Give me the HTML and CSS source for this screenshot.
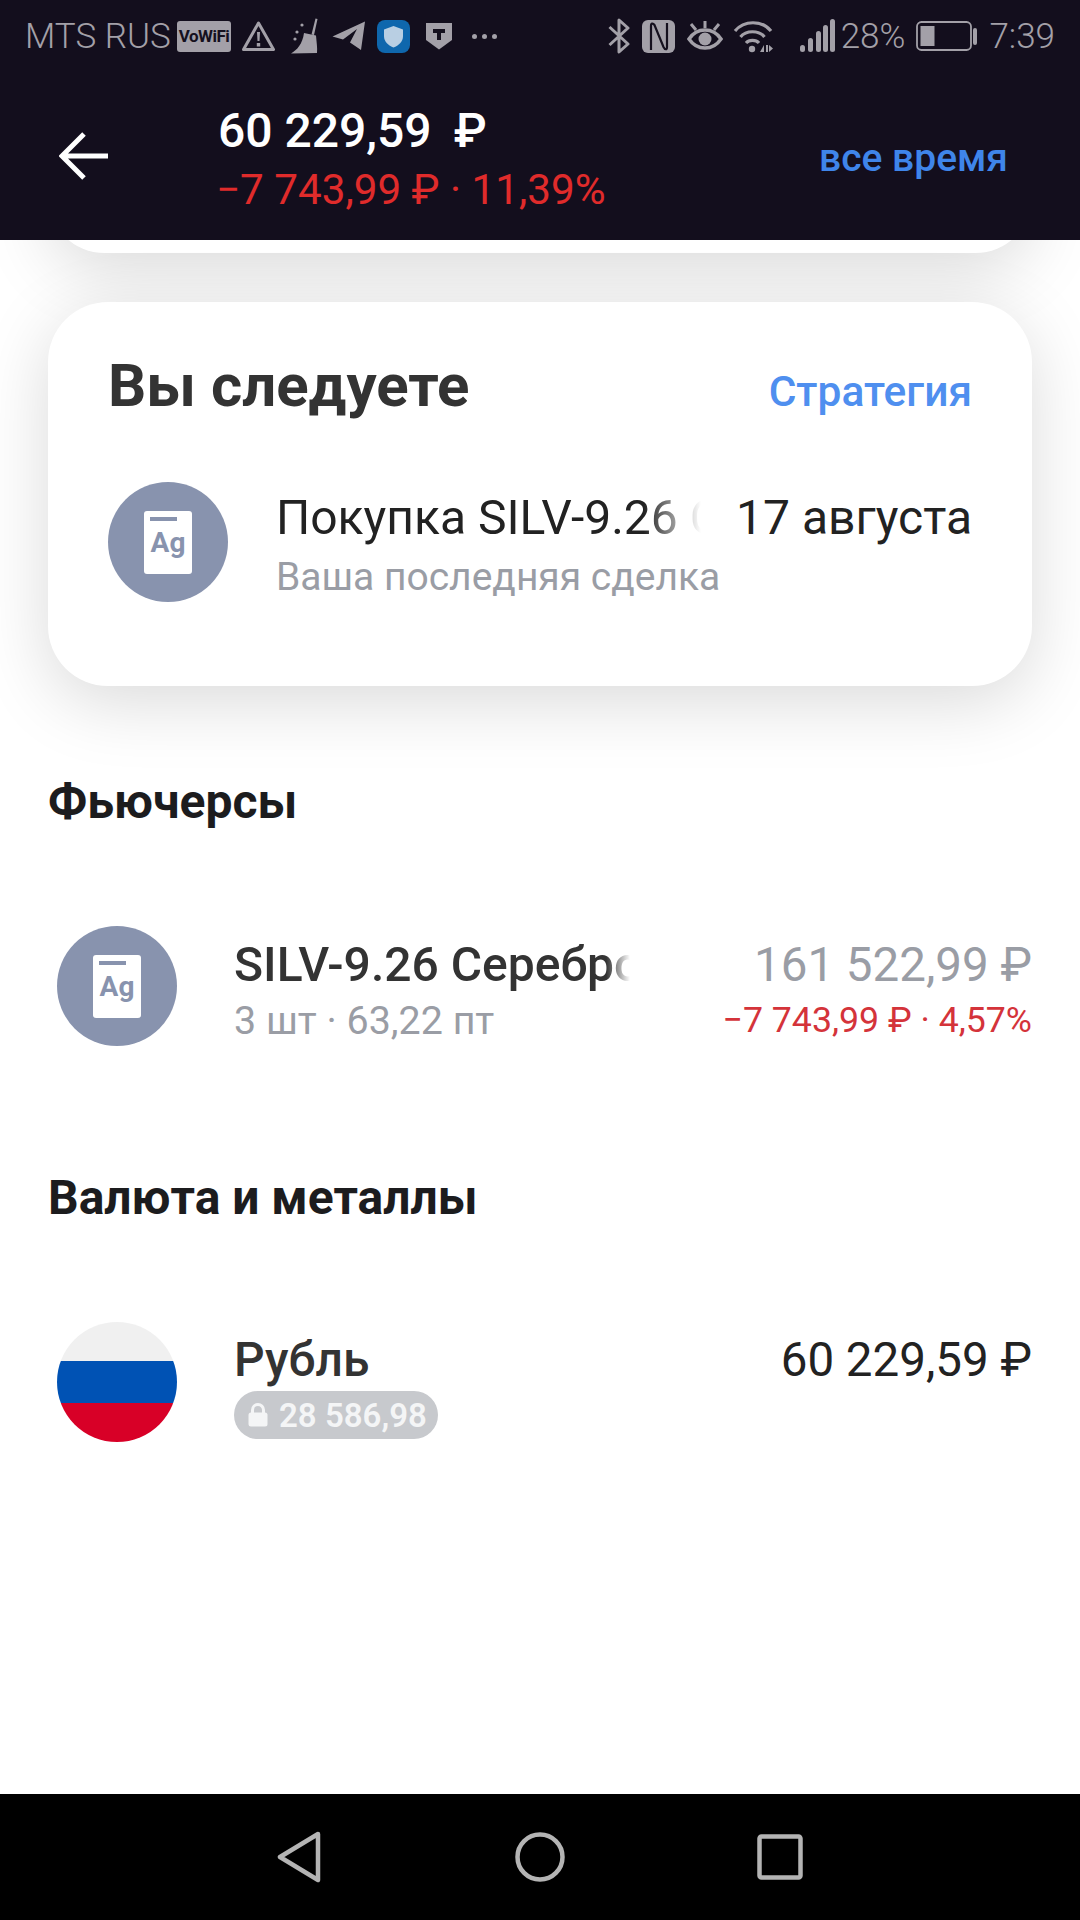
FILE: index.html
```html
<!DOCTYPE html>
<html lang="ru">
<head>
    <meta charset="UTF-8">
    <meta name="viewport" content="width=device-width, initial-scale=1.0">
    <title>Портфель</title>
    <link rel="stylesheet" href="styles.css">
</head>
<body>
    <div class="screen">
        <header class="top">
            <div class="status">
                <div class="status-group">
                    <span class="carrier">MTS RUS</span>
                    <span class="vowifi">VoWiFi</span>
                    <svg class="ic" width="33" height="30" viewBox="0 0 33 30"><path d="M16.5 2 L31.5 28.5 H1.5 Z" fill="none" stroke="#a3a0a8" stroke-width="3" stroke-linejoin="round"/><path d="M15 11h3l-.5 9h-2z M14.8 22h3.4v3.4h-3.4z" fill="#a3a0a8"/></svg>
                    <svg class="ic broom" width="30" height="36" viewBox="0 0 30 36"><path d="M25.500 0.500 L27.500 1 L24 17 L21.500 16.500 Z" fill="#a3a0a8"/><path d="M14 15 L26 17.500 C26.500 24 27.500 30 27 35 L1 35.500 C7 32 12.500 26 14 15 Z" fill="#a3a0a8"/><circle cx="7" cy="14" r="1.600" fill="#a3a0a8"/><circle cx="12" cy="7" r="1.600" fill="#a3a0a8"/><circle cx="5" cy="21" r="1.600" fill="#a3a0a8"/></svg>
                    <svg class="ic plane" width="34" height="30" viewBox="0 0 34 30"><path d="M33 0.500 L29 29 L18 21.500 L25 8 L11 18.500 L0.500 15.500 Z" fill="#a3a0a8"/></svg>
                    <svg class="ic shield-app" width="33" height="33" viewBox="0 0 33 33"><rect width="33" height="33" rx="8" fill="#0f67ad"/><path d="M16.500 6 L26 9.500 V16 C26 22 21.500 25.500 16.500 27.500 C11.500 25.500 7 22 7 16 V9.500 Z" fill="#b9cfe3"/></svg>
                    <svg class="ic" width="28" height="28" viewBox="0 0 28 28"><path d="M1 1 H27 V18 L14 27.500 L1 18 Z" fill="#a3a0a8"/><path d="M8 7 H20 V11 H16 V18 H12 V11 H8 Z" fill="#15101e"/></svg>
                    <span class="dots"><i></i><i></i><i></i></span>
                </div>
                <div class="status-group status-right">
                    <svg class="ic" width="23" height="36" viewBox="0 0 23 36"><path d="M1.500 9 L20 26 L11 34 V2 L20 10 L1.500 27" fill="none" stroke="#a3a0a8" stroke-width="3" stroke-linejoin="round"/></svg>
                    <svg class="ic nfc" width="33" height="33" viewBox="0 0 33 33"><rect width="33" height="33" rx="6" fill="#a3a0a8"/><path d="M9 30 V6 C9 3 11 3 12.500 5 L21.500 27 C23 30 25 30 25 27 V3" fill="none" stroke="#15101e" stroke-width="2.200"/></svg>
                    <svg class="ic eye" width="36" height="33" viewBox="0 0 36 33"><path d="M2 19 C10 7 26 7 34 19 C26 31 10 31 2 19 Z" fill="none" stroke="#a3a0a8" stroke-width="3.500"/><circle cx="18" cy="19" r="6.500" fill="#a3a0a8"/><path d="M18 1 V8 M4 4 L9 10 M32 4 L27 10" stroke="#a3a0a8" stroke-width="3"/></svg>
                    <svg class="ic wifi" width="40" height="33" viewBox="0 0 40 33"><path d="M2 11 C11 0 29 0 38 11 M7.500 17 C13 10 26 10 31.500 17 M13 23 C16 19.500 23 19.500 26 23" fill="none" stroke="#a3a0a8" stroke-width="3.200"/><circle cx="19" cy="29" r="3.200" fill="#a3a0a8"/><path d="M27 32 L31 25 V32 Z M33 25 H35 V32 H33 Z M36 25 L40 28.500 L36 32 Z" fill="#a3a0a8"/></svg>
                    <svg class="ic signal" width="35" height="34" viewBox="0 0 35 34"><rect x="0" y="26" width="5" height="7" rx="2.500" fill="#a3a0a8"/><rect x="8" y="19" width="5" height="14" rx="2.500" fill="#a3a0a8"/><rect x="16" y="12" width="5" height="21" rx="2.500" fill="#a3a0a8"/><rect x="23" y="6" width="5" height="27" rx="2.500" fill="#a3a0a8"/><rect x="30" y="0" width="5" height="33" rx="2.500" fill="#a3a0a8"/></svg>
                    <span class="percent">28%</span>
                    <svg class="ic battery" width="61" height="30" viewBox="0 0 61 30"><rect x="1" y="1" width="54" height="28" rx="4.500" fill="none" stroke="#a3a0a8" stroke-width="1.800"/><rect x="4.500" y="5" width="14" height="20" fill="#a3a0a8"/><rect x="57" y="7" width="4" height="17" rx="2" fill="#a3a0a8"/></svg>
                    <span class="clock">7:39</span>
                </div>
            </div>
            <div class="appbar">
                <svg class="arrow" width="50" height="48" viewBox="0 0 50 48"><path d="M49 24 H4 M25 2 L3 24 L25 46" fill="none" stroke="#ffffff" stroke-width="5"/></svg>
                <div class="balance">
                    <div class="balance-sum">60 229,59<span class="balance-cur">₽</span></div>
                    <div class="balance-diff">−7 743,99 ₽ · 11,39%</div>
                </div>
                <a class="period">все время</a>
            </div>
        </header>

        <main class="content">
            <div class="card card-prev"></div>

            <section class="card">
                <div class="card-head">
                    <h2 class="card-title">Вы следуете</h2>
                    <a class="card-link">Стратегия</a>
                </div>
                <div class="row row-follow">
                    <div class="avatar"><div class="doc">Ag</div></div>
                    <div class="follow-body">
                        <div class="follow-line">
                            <span class="follow-name">Покупка SILV-9.26 Серебро</span>
                            <span class="follow-date">17 августа</span>
                        </div>
                        <div class="muted follow-sub">Ваша последняя сделка</div>
                    </div>
                </div>
            </section>

            <section class="group group-futures">
                <h3 class="group-title">Фьючерсы</h3>
                <div class="row asset">
                    <div class="avatar"><div class="doc">Ag</div></div>
                    <div class="asset-body">
                        <div class="asset-name fade">SILV-9.26 Серебро</div>
                        <div class="muted asset-sub">3 шт · 63,22 пт</div>
                    </div>
                    <div class="asset-values">
                        <div class="asset-price muted">161 522,99 ₽</div>
                        <div class="asset-diff">−7 743,99 ₽ · 4,57%</div>
                    </div>
                </div>
            </section>

            <section class="group group-money">
                <h3 class="group-title">Валюта и металлы</h3>
                <div class="row asset">
                    <div class="avatar flag"></div>
                    <div class="asset-body">
                        <div class="asset-name">Рубль</div>
                        <div class="pill">
                            <svg width="20" height="24" viewBox="0 0 20 24"><path d="M4.500 10 V7 a5.500 5.500 0 0 1 11 0 V10" fill="none" stroke="#f4f5f6" stroke-width="3"/><rect x="0.500" y="9.500" width="19" height="14" rx="2.500" fill="#f4f5f6"/></svg>
                            <span>28 586,98</span>
                        </div>
                    </div>
                    <div class="asset-values">
                        <div class="asset-price money">60 229,59 ₽</div>
                    </div>
                </div>
            </section>
        </main>

        <nav class="navbar">
            <svg width="46" height="52" viewBox="0 0 46 52"><path d="M41 3 L3 26 L41 49 Z" fill="none" stroke="#b4b4b4" stroke-width="4.500" stroke-linejoin="round"/></svg>
            <svg width="50" height="50" viewBox="0 0 50 50"><circle cx="25" cy="25" r="22.500" fill="none" stroke="#b4b4b4" stroke-width="4.500"/></svg>
            <svg width="46" height="46" viewBox="0 0 46 46"><rect x="2.500" y="2.500" width="41" height="41" rx="2" fill="none" stroke="#b4b4b4" stroke-width="4.500"/></svg>
        </nav>
    </div>
</body>
</html>
```

FILE: styles.css
```css
* {
    box-sizing: border-box;
}
body {
    margin: 0;
    font-family: Roboto, "Liberation Sans", sans-serif;
    background-color: #ffffff;
}
.screen {
    width: 1080px;
    height: 1920px;
    display: flex;
    flex-direction: column;
    overflow: hidden;
}

/* status bar + app bar */
.top {
    height: 240px;
    flex: none;
    background-color: #130e1d;
    position: relative;
    z-index: 1;
}
.status {
    height: 72px;
    padding: 0 25px 0 25px;
    display: flex;
    justify-content: space-between;
    align-items: center;
    color: #a3a0a8;
    font-size: 35px;
    font-weight: 300;
}
.status-group {
    display: flex;
    align-items: center;
}
.ic {
    flex: none;
}
.carrier {
    width: 152px;
}
.vowifi {
    width: 54px;
    height: 31px;
    margin-right: 11px;
    border-radius: 3px;
    background-color: #a3a0a8;
    color: #15101e;
    font-size: 17px;
    font-weight: 700;
    line-height: 31px;
    text-align: center;
    letter-spacing: -0.5px;
}
.broom {
    margin-left: 15px;
}
.plane {
    margin-left: 12px;
}
.shield-app {
    margin-left: 11px;
}
.shield-app + .ic {
    margin-left: 15px;
}
.dots {
    display: flex;
    gap: 5px;
    margin-left: 19px;
}
.dots i {
    width: 5px;
    height: 5px;
    border-radius: 50%;
    background-color: #a3a0a8;
}
.nfc {
    margin-left: 11px;
}
.eye {
    margin-left: 12px;
}
.wifi {
    margin-left: 10px;
}
.signal {
    margin-left: 27px;
}
.percent {
    margin-left: 6px;
}
.battery {
    margin-left: 11px;
}
.clock {
    margin-left: 12px;
}
.appbar {
    height: 168px;
    padding: 0 72px 0 59px;
    display: flex;
    align-items: center;
}
.arrow {
    flex: none;
}
.balance {
    margin-left: 109px;
    flex: 1;
    padding-top: 7px;
}
.balance-sum {
    font-size: 48px;
    font-weight: 500;
    line-height: 54px;
    color: #ffffff;
}
.balance-cur {
    margin-left: 22px;
}
.balance-diff {
    margin-top: 7px;
    margin-left: -2px;
    font-size: 42.2px;
    line-height: 50px;
    color: #e02b2b;
}
.period {
    margin-top: 4px;
    font-size: 39px;
    font-weight: 500;
    color: #3f85ea;
}

/* content */
.content {
    flex: 1;
    display: flex;
    flex-direction: column;
}
.card {
    margin: 0 48px;
    height: 384px;
    padding: 48px 60px 0;
    background-color: #ffffff;
    border-radius: 60px;
    box-shadow: 0 16px 70px rgba(0, 0, 0, 0.15);
}
.card-prev {
    height: 113px;
    margin-top: -100px;
    margin-bottom: 49px;
    padding: 0;
}
.card-head {
    display: flex;
    justify-content: space-between;
    align-items: baseline;
}
.card-title {
    margin: 0;
    font-size: 60px;
    font-weight: 700;
    line-height: 72px;
    color: #333333;
}
.card-link {
    font-size: 42.5px;
    font-weight: 500;
    line-height: 50px;
    color: #4f8fef;
}
.row {
    display: flex;
    align-items: center;
}
.row-follow {
    margin-top: 60px;
}
.avatar {
    width: 120px;
    height: 120px;
    flex: none;
    display: flex;
    justify-content: center;
    align-items: center;
    border-radius: 50%;
    background-color: #8893ae;
}
.doc {
    width: 48px;
    height: 63px;
    padding-top: 14px;
    border-radius: 3px;
    background-color: #ffffff;
    color: #8893ae;
    font-size: 28px;
    font-weight: 700;
    line-height: 36px;
    text-align: center;
    position: relative;
}
.doc::before {
    content: "";
    position: absolute;
    top: 6px;
    left: 6px;
    width: 27px;
    height: 4px;
    background-color: #8893ae;
}
.follow-body {
    margin-left: 48px;
    padding-top: 4px;
    flex: 1;
    min-width: 0;
}
.follow-line {
    display: flex;
    justify-content: space-between;
    font-size: 48px;
    line-height: 56px;
    color: #222222;
}
.follow-name {
    width: 438px;
    overflow: hidden;
    white-space: nowrap;
    -webkit-mask-image: linear-gradient(to right, #000 84%, transparent 97%);
    mask-image: linear-gradient(to right, #000 84%, transparent 97%);
}
.muted {
    color: #9a9da5;
}
.follow-sub {
    margin-top: 9px;
    font-size: 39px;
    line-height: 44px;
}
.group {
    margin: 0 48px;
}
.group-futures {
    margin-top: 88px;
}
.group-money {
    margin-top: 124px;
}
.group-title {
    margin: 0;
    font-size: 48px;
    font-weight: 700;
    line-height: 56px;
    color: #1c1c1e;
}
.asset {
    margin-top: 96px;
    padding-left: 9px;
}
.asset-body {
    margin-left: 57px;
    padding-top: 7px;
    width: 396px;
    flex: none;
}
.asset-name {
    font-size: 48px;
    font-weight: 500;
    line-height: 56px;
    color: #333333;
    white-space: nowrap;
}
.fade {
    overflow: hidden;
    -webkit-mask-image: linear-gradient(to right, #000 94%, transparent 100%);
    mask-image: linear-gradient(to right, #000 94%, transparent 100%);
}
.asset-sub {
    margin-top: 6px;
    font-size: 39.4px;
    line-height: 44px;
}
.asset-values {
    flex: 1;
    align-self: flex-start;
    text-align: right;
}
.asset-price {
    margin-top: 12px;
    font-size: 47.5px;
    line-height: 54px;
    white-space: nowrap;
}
.money {
    margin-top: 11px;
    color: #222222;
}
.asset-diff {
    margin-top: 8px;
    font-size: 35.7px;
    line-height: 40px;
    color: #d4333a;
    white-space: nowrap;
}
.pill {
    display: flex;
    align-items: center;
    gap: 11px;
    width: fit-content;
    height: 48px;
    margin-top: 3px;
    padding: 0 11px 0 14px;
    border-radius: 24px;
    background-color: #c7c9cd;
    color: #f4f5f6;
    font-size: 33px;
    font-weight: 600;
}
.flag {
    background: linear-gradient(to bottom, #f0f0f0 0 39px, #0052b4 39px 81px, #d80027 81px);
}

/* android nav */
.navbar {
    height: 126px;
    flex: none;
    background-color: #000000;
    display: flex;
    align-items: center;
    padding: 0 277px 0 277px;
    justify-content: space-between;
}
```
